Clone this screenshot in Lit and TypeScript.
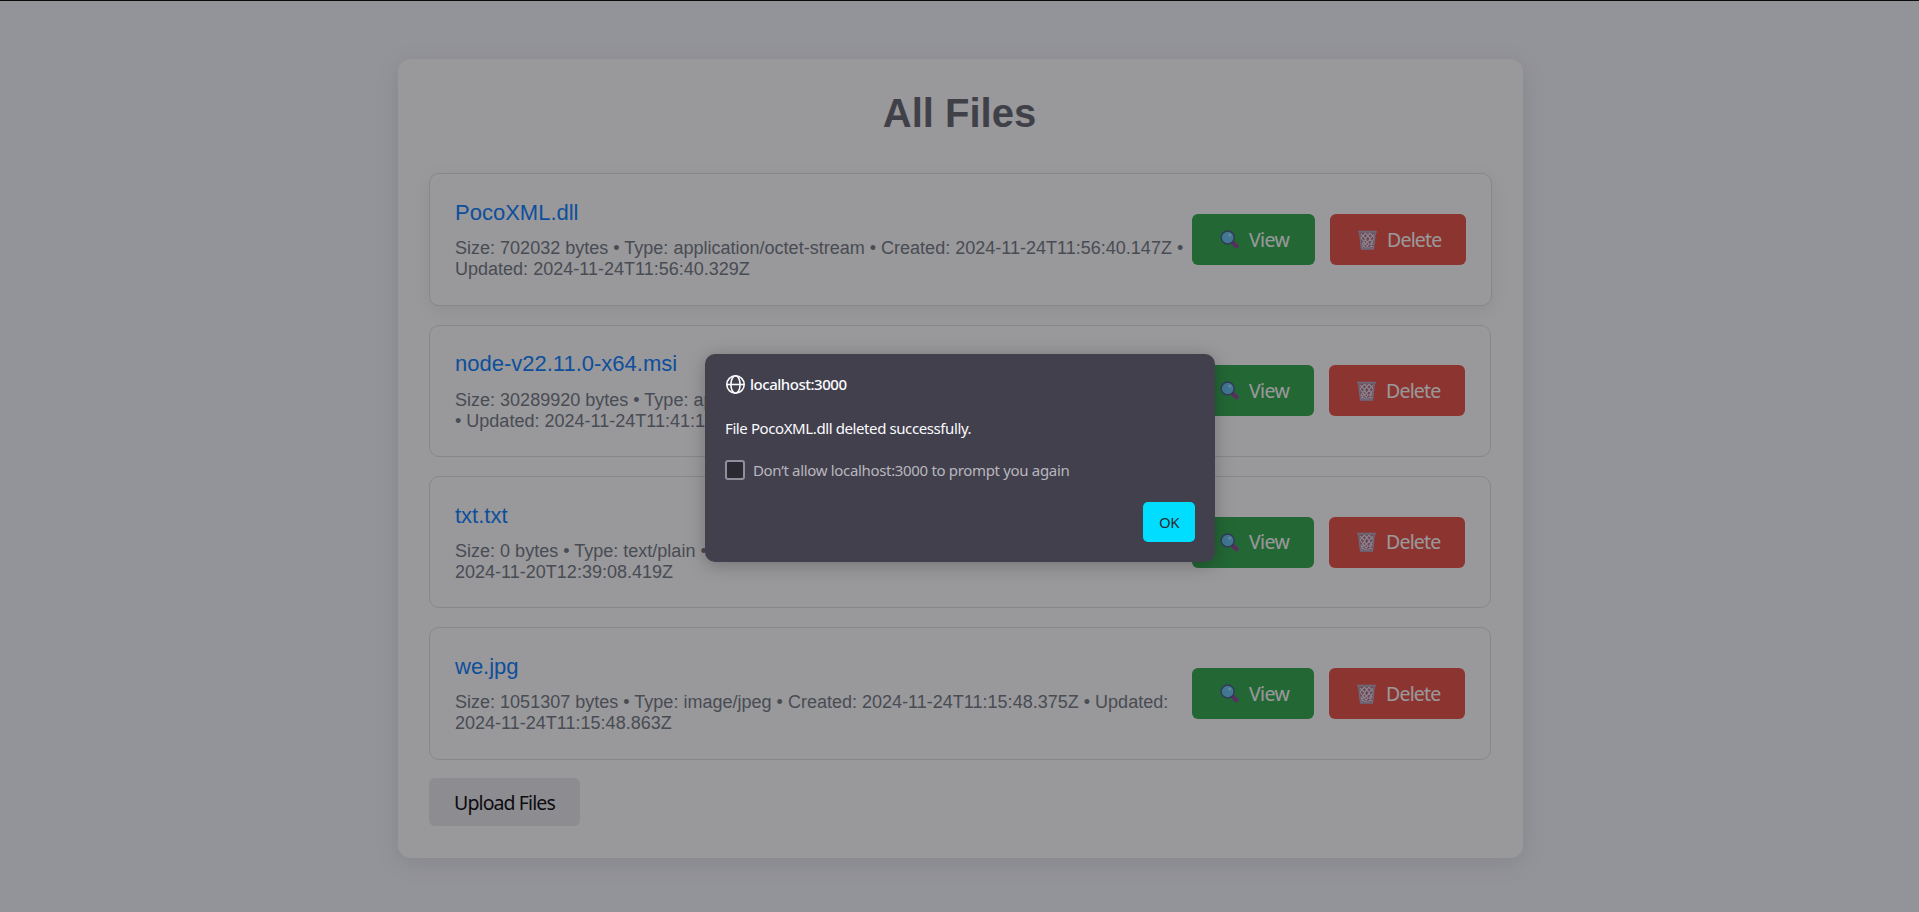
import { LitElement, html, css } from "lit";
import { customElement, property } from "lit/decorators.js";

interface FileInfo {
  name: string;
  lines: [string, string];
  active?: boolean;
}

const FILES: FileInfo[] = [
  {
    name: "PocoXML.dll",
    lines: [
      "Size: 702032 bytes • Type: application/octet-stream • Created: 2024-11-24T11:56:40.147Z •",
      "Updated: 2024-11-24T11:56:40.329Z",
    ],
    active: true,
  },
  {
    name: "node-v22.11.0-x64.msi",
    lines: ["Size: 30289920 bytes • Type: ap", "• Updated: 2024-11-24T11:41:1"],
  },
  {
    name: "txt.txt",
    lines: ["Size: 0 bytes • Type: text/plain •", "2024-11-20T12:39:08.419Z"],
  },
  {
    name: "we.jpg",
    lines: [
      "Size: 1051307 bytes • Type: image/jpeg • Created: 2024-11-24T11:15:48.375Z • Updated:",
      "2024-11-24T11:15:48.863Z",
    ],
  },
];

const magnifier = html`<svg width="19" height="19" viewBox="0 0 19 19">
  <path d="M12.4 12.4L16.6 16.2" stroke="#8a3f96" stroke-width="4.2" stroke-linecap="round" />
  <path d="M11.2 11.2l1.6 1.6" stroke="#4f5a80" stroke-width="2.4" />
  <circle cx="7.7" cy="7.5" r="6.5" fill="#62c2ee" stroke="#3f5580" stroke-width="1.4" />
  <circle cx="9.8" cy="5" r="1.5" fill="#a4e4fa" />
</svg>`;

const trash = html`<svg width="19" height="20" viewBox="0 0 19 20">
  <path d="M1.6 2.5L3.3 18.6H15.7L17.4 2.5Z" fill="#b5687a" />
  <path
    d="M3 4l5 5-4 5 4 4M7.5 3l5 6-5 5 3 4M12 3l4.500 5-4 6 3 4M16 4l-4 5 3 4-4 5M12 3L7 9l4 5-3 4M7.5 3L3 8l4 5-3 5"
    fill="none" stroke="#e2dae8" stroke-width="1.2" />
  <path d="M1.8 3L3.4 18M17.2 3L15.6 18" stroke="#b2a8c0" stroke-width="1.4" />
  <path d="M.2 1.8H18.8M3 18.6H16" stroke="#b0a8c2" stroke-width="2.1" />
</svg>`;

@customElement("file-card")
export class FileCard extends LitElement {
  @property({ attribute: false }) file!: FileInfo;

  static styles = css`
    :host { display: block; }
    .card {
      box-sizing: border-box;
      height: 132.5px;
      border: 1px solid #dfdfdf;
      border-radius: 10px;
      padding: 0 25px;
      display: flex;
      align-items: center;
      background: #fff;
    }
    .active { box-shadow: 0 5px 18px rgba(0, 0, 0, 0.08); width: 1063px; }
    .info { width: 737px; flex: none; white-space: nowrap; padding-top: 1px; }
    .name { color: #007bff; font-size: 22px; line-height: 26px; margin-bottom: 12.3px; }
    .meta { color: #6c757d; font-size: 18px; line-height: 21px; letter-spacing: 0.01px; }
    .buttons { display: flex; gap: 15px; flex: 1; }
    .btn {
      box-sizing: border-box;
      height: 51px;
      border-radius: 6px;
      display: flex;
      align-items: center;
      color: #fff;
      font: 19.5px/52px "Noto Sans", sans-serif;
      letter-spacing: -0.6px;
      padding-left: 28px;
      gap: 10px;
    }
    .view { flex: 1; background: #28a745; }
    .delete { width: 136px; flex: none; background: #e74c3c; letter-spacing: -0.8px; }
  `;

  render() {
    const f = this.file;
    return html`<div class="card ${f.active ? "active" : ""}">
      <div class="info">
        <div class="name">${f.name}</div>
        ${f.lines.map((l) => html`<div class="meta">${l}</div>`)}
      </div>
      <div class="buttons">
        <div class="btn view">${magnifier}<span>View</span></div>
        <div class="btn delete">${trash}<span>Delete</span></div>
      </div>
    </div>`;
  }
}

@customElement("alert-dialog")
export class AlertDialog extends LitElement {
  static styles = css`
    :host {
      display: flex;
      flex-direction: column;
      box-sizing: border-box;
      width: 510px;
      height: 208px;
      padding: 20px;
      border-radius: 10px;
      background: #42404d;
      color: #fbfbfe;
      box-shadow: 0 3px 18px rgba(0, 0, 0, 0.25);
      font: 15px/20px "Noto Sans", sans-serif;
      white-space: nowrap;
    }
    .origin { display: flex; align-items: center; gap: 5px; height: 20px; margin-left: 1px; font-weight: 500; letter-spacing: -0.48px; }
    .message { margin-top: 24px; letter-spacing: -0.4px; }
    .prompt { display: flex; align-items: center; gap: 8px; margin-top: 22px; color: #b8b7bf; letter-spacing: -0.33px; }
    .box { box-sizing: border-box; width: 20px; height: 20px; border: 2px solid #8f8f9d; border-radius: 3px; background: #2b2a33; }
    .actions { display: flex; justify-content: flex-end; margin-top: 22px; }
    .ok { width: 52px; height: 40px; border-radius: 5px; background: #00ddff; color: #2b2a33; text-align: center; line-height: 41px; letter-spacing: -0.6px; }
  `;

  render() {
    return html`
      <div class="origin">
        <svg width="19" height="19" viewBox="0 0 19 19" fill="none" stroke="#fbfbfe" stroke-width="1.6">
          <circle cx="9.5" cy="9.5" r="8.7" />
          <ellipse cx="9.5" cy="9.5" rx="4.6" ry="8.7" />
          <path d="M1 9.5H18" />
        </svg>
        <span>localhost:3000</span>
      </div>
      <div class="message">File PocoXML.dll deleted successfully.</div>
      <div class="prompt"><span class="box"></span><span>Don’t allow localhost:3000 to prompt you again</span></div>
      <div class="actions"><div class="ok">OK</div></div>
    `;
  }
}

@customElement("app-root")
export class AppRoot extends LitElement {
  static styles = css`
    :host {
      display: block;
      position: relative;
      box-sizing: border-box;
      height: 912px;
      overflow: hidden;
      padding-top: 59px;
      background: #f4f7fb;
      font-family: "Liberation Sans", sans-serif;
    }
    .panel {
      box-sizing: border-box;
      width: 1125px;
      height: 799px;
      margin: 0 auto 0 398px;
      padding: 30px 31px;
      border-radius: 13px;
      background: #fff;
      box-shadow: 0 5px 25px rgba(0, 0, 0, 0.1);
    }
    .title { margin: 0 2px 36.4px 0; text-align: center; font-size: 40px; line-height: 48px; font-weight: bold; color: #5c5f69; }
    .list { display: flex; flex-direction: column; gap: 18.8px; width: 1062px; }
    .upload {
      width: 151px;
      height: 48px;
      margin-top: 18.2px;
      border-radius: 6px;
      background: #e9e9ed;
      color: #000;
      text-align: center;
      font: 19.5px/50px "Noto Sans", sans-serif;
      letter-spacing: -0.9px;
    }
    .shade { position: absolute; inset: 0; background: rgba(28, 27, 34, 0.45); border-top: 1px solid #0c0c0d; }
    .dialog { position: absolute; left: 705px; top: 354px; }
  `;

  render() {
    return html`
      <main class="panel">
        <h1 class="title">All Files</h1>
        <div class="list">${FILES.map((f) => html`<file-card .file=${f}></file-card>`)}</div>
        <div class="upload">Upload Files</div>
      </main>
      <div class="shade"></div>
      <alert-dialog class="dialog"></alert-dialog>
    `;
  }
}
